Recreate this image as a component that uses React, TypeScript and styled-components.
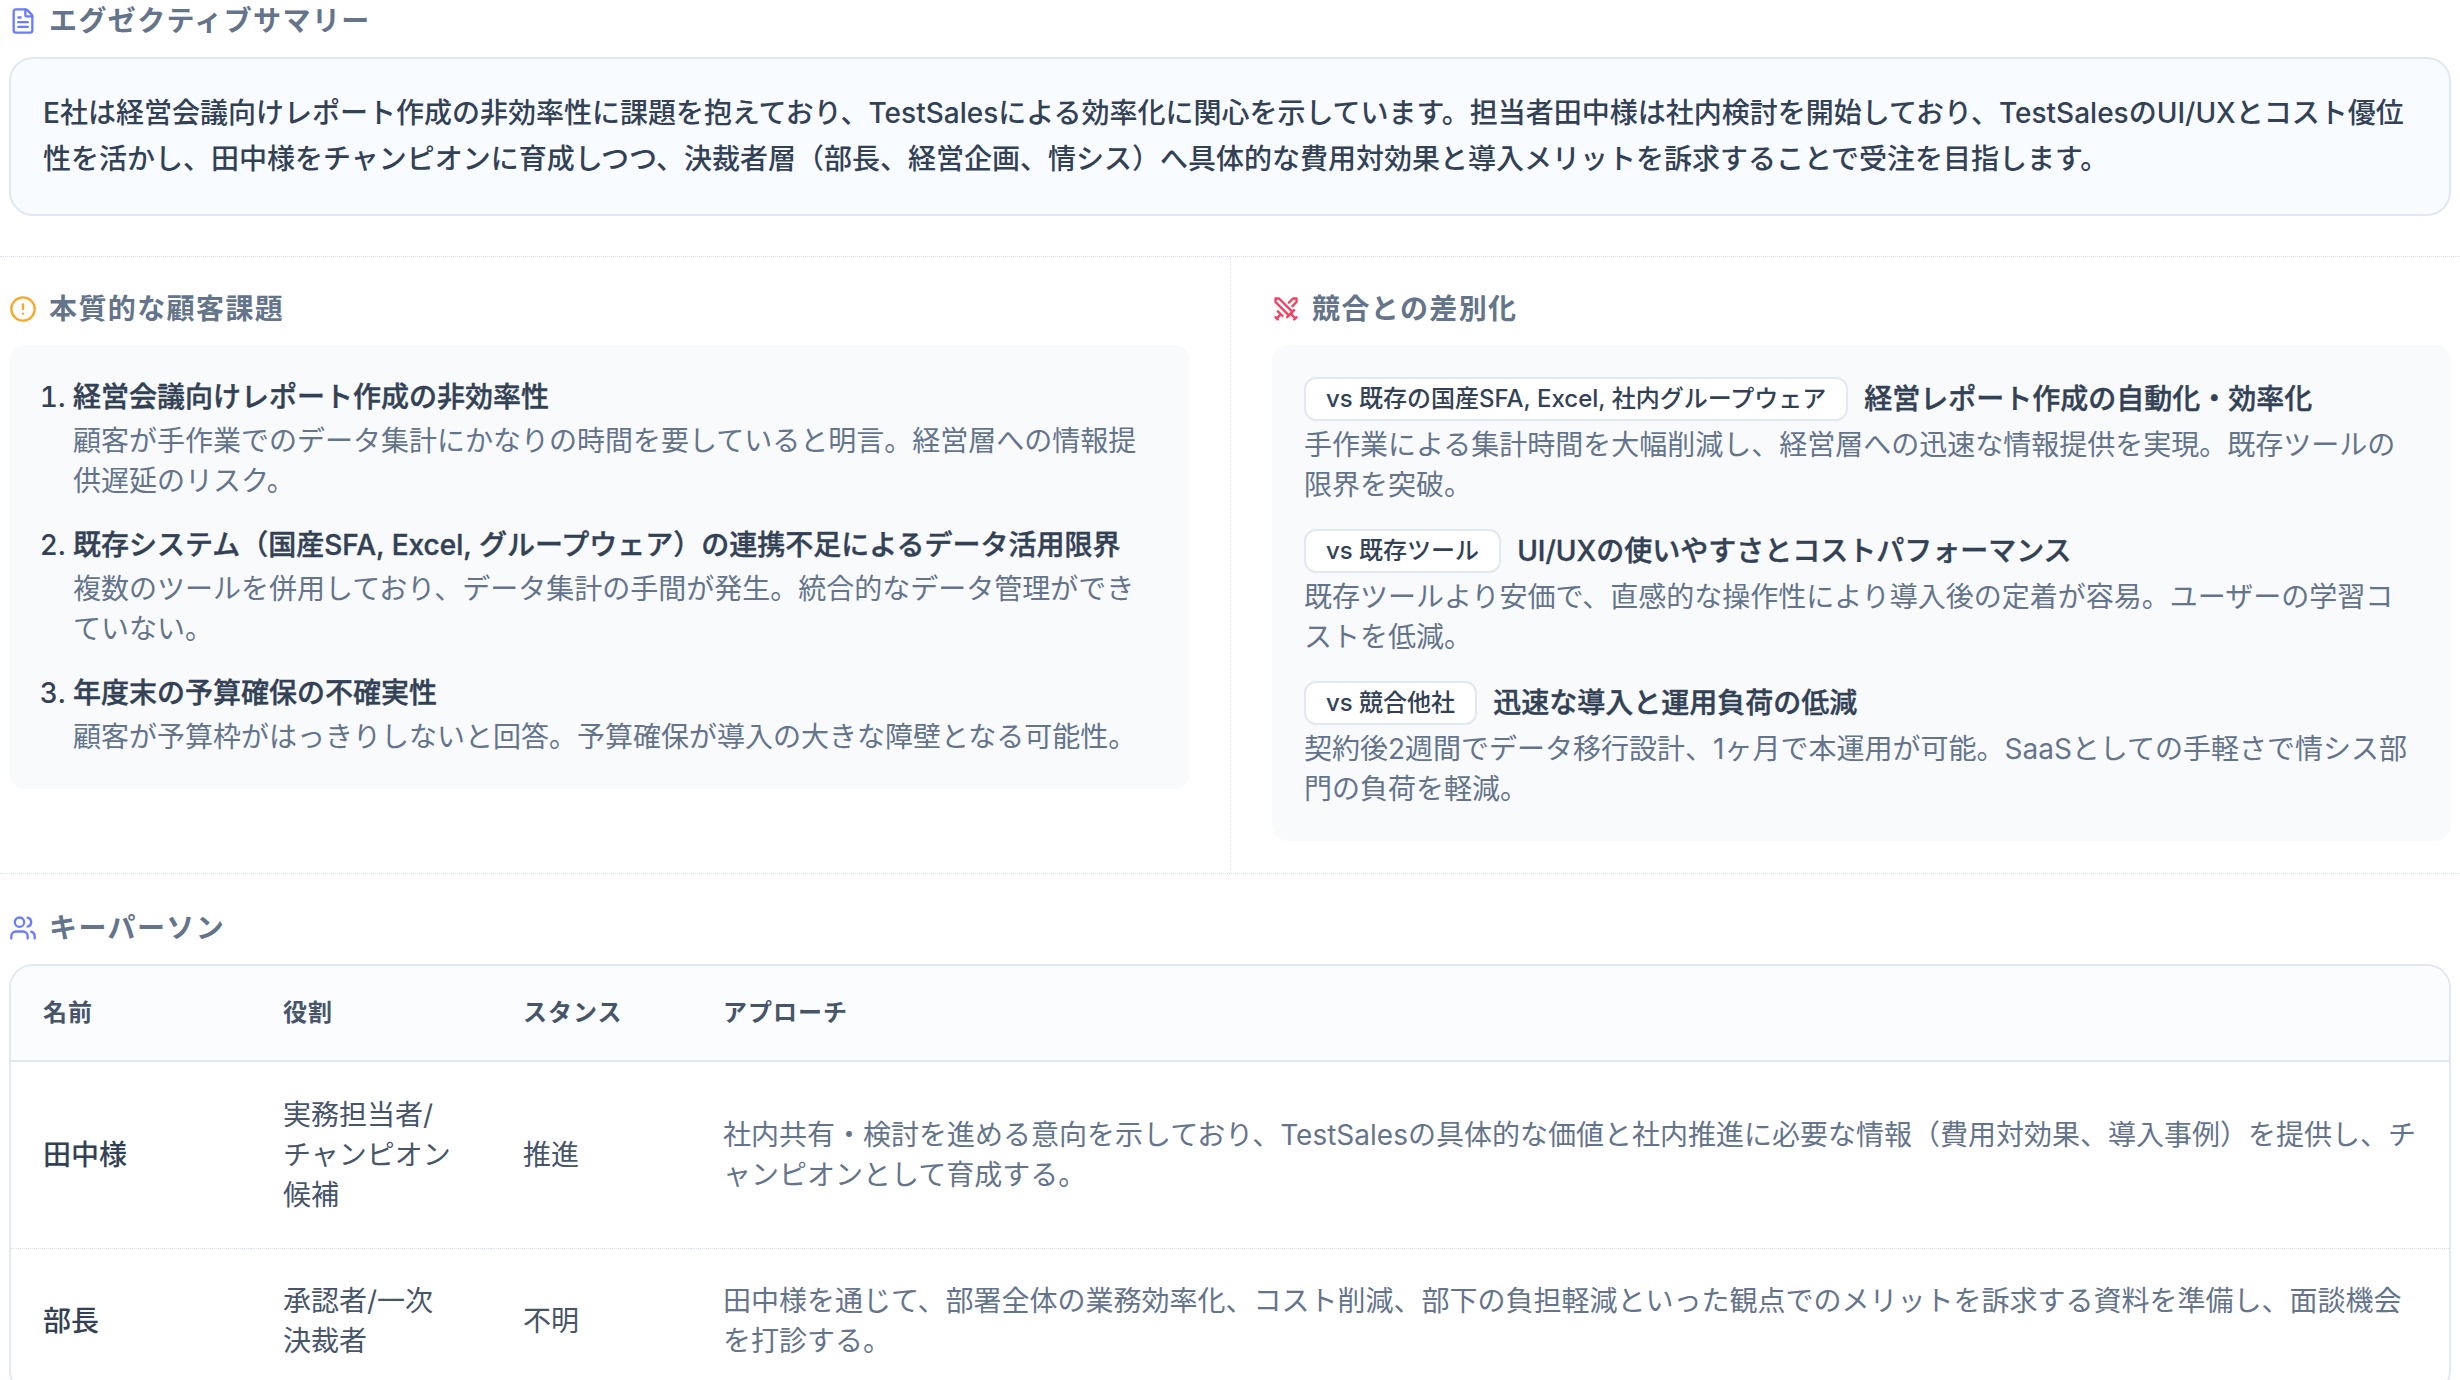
import React from 'react';
import styled, { createGlobalStyle } from 'styled-components';
import { FileText, CircleAlert, Swords, Users } from 'lucide-react';

const GlobalStyle = createGlobalStyle`
  html, body {
    margin: 0;
    height: 100%;
    overflow: hidden;
    background: #fff;
  }
  body {
    font-family: Inter, "Noto Sans CJK JP", sans-serif;
    font-size: 28px;
    line-height: 40px;
    color: #334155;
  }
  * { box-sizing: border-box; }
`;

const Page = styled.div`
  display: flex;
  flex-direction: column;
  padding-top: 1px;
`;

const Block = styled.section`
  padding: 0 9px;
`;

const TableBlock = styled(Block)`
  padding-top: 34px;
`;

const Heading = styled.h3`
  display: flex;
  align-items: center;
  gap: 12px;
  margin: 0 0 16px;
  font-size: 28px;
  line-height: 40px;
  font-weight: 600;
  letter-spacing: 1.4px;
  color: #64748b;
`;

const SummaryCard = styled.div`
  padding: 32px;
  background: #f8fbff;
  border: 2px solid #e2e8f0;
  border-radius: 24px;
  font-weight: 500;
  line-height: 45.5px;
  color: #334155;
`;

const Columns = styled.div`
  display: grid;
  grid-template-columns: 1fr 1fr;
  margin-top: 40px;
  border-top: 1px dotted #d5e0f0;
  border-bottom: 1px dotted #d5e0f0;
`;

const LeftColumn = styled.section`
  padding: 32px 40px 32px 9px;
`;

const RightColumn = styled.section`
  padding: 32px 9px 32px 41px;
  border-left: 1px dotted #d5e0f0;
`;

const InsetCard = styled.div`
  padding: 32px;
  background: #f8fafc;
  border-radius: 16px;
`;

const IssueList = styled.ol`
  display: flex;
  flex-direction: column;
  gap: 24px;
  margin: 0;
  padding: 0 0 0 32px;
`;

const Issue = styled.li`
  font-weight: 500;
  color: #334155;
`;

const ItemTitle = styled.div`
  font-weight: 500;
  -webkit-text-stroke: 0.4px #334155;
  color: #334155;
`;

const ItemText = styled.p`
  margin: 4px 0 0;
  font-weight: 400;
  color: #64748b;
`;

const DiffList = styled.div`
  display: flex;
  flex-direction: column;
  gap: 24px;
`;

const DiffTop = styled.div`
  display: flex;
  align-items: center;
  gap: 16px;
  height: 44px;
`;

const VsBadge = styled.span`
  padding: 4px 20px;
  font-size: 24px;
  line-height: 32px;
  font-weight: 500;
  color: #334155;
  background: #fff;
  border: 2px solid #e2e8f0;
  border-radius: 12px;
  white-space: nowrap;
`;

const DiffTitle = styled.span`
  font-weight: 500;
  -webkit-text-stroke: 0.4px #334155;
  color: #334155;
`;

const TableCard = styled.div`
  border: 2px solid #e2e8f0;
  border-radius: 24px;
  overflow: hidden;
`;

const Table = styled.table`
  width: 100%;
  table-layout: fixed;
  border-collapse: separate;
  border-spacing: 0;
`;

const HeadCell = styled.th<{ $width?: number }>`
  ${(p) => (p.$width ? `width: ${p.$width}px;` : '')}
  padding: 31px 32px;
  font-size: 24px;
  line-height: 32px;
  font-weight: 600;
  letter-spacing: 1px;
  text-align: left;
  color: #475569;
  background: #fafcfe;
  border-bottom: 2px solid #e2e8f0;
`;

const Row = styled.tr`
  & + & td {
    padding: 32px;
    border-top: 1px dotted #d5e0f0;
  }
`;

const NameCell = styled.td`
  padding: 33px 32px;
  font-weight: 500;
  color: #334155;
`;

const Cell = styled.td`
  padding: 33px 32px;
  color: #475569;
`;

const ApproachCell = styled.td`
  padding: 33px 32px;
  color: #64748b;
`;

const issues = [
  {
    title: '経営会議向けレポート作成の非効率性',
    text: '顧客が手作業でのデータ集計にかなりの時間を要していると明言。経営層への情報提供遅延のリスク。',
  },
  {
    title: '既存システム（国産SFA, Excel, グループウェア）の連携不足によるデータ活用限界',
    text: '複数のツールを併用しており、データ集計の手間が発生。統合的なデータ管理ができていない。',
  },
  {
    title: '年度末の予算確保の不確実性',
    text: '顧客が予算枠がはっきりしないと回答。予算確保が導入の大きな障壁となる可能性。',
  },
];

const diffs = [
  {
    vs: 'vs 既存の国産SFA, Excel, 社内グループウェア',
    title: '経営レポート作成の自動化・効率化',
    text: '手作業による集計時間を大幅削減し、経営層への迅速な情報提供を実現。既存ツールの限界を突破。',
  },
  {
    vs: 'vs 既存ツール',
    title: 'UI/UXの使いやすさとコストパフォーマンス',
    text: '既存ツールより安価で、直感的な操作性により導入後の定着が容易。ユーザーの学習コストを低減。',
  },
  {
    vs: 'vs 競合他社',
    title: '迅速な導入と運用負荷の低減',
    text: '契約後2週間でデータ移行設計、1ヶ月で本運用が可能。SaaSとしての手軽さで情シス部門の負荷を軽減。',
  },
];

const people = [
  {
    name: '田中様',
    role: ['実務担当者/', 'チャンピオン', '候補'],
    stance: '推進',
    approach:
      '社内共有・検討を進める意向を示しており、TestSalesの具体的な価値と社内推進に必要な情報（費用対効果、導入事例）を提供し、チャンピオンとして育成する。',
  },
  {
    name: '部長',
    role: ['承認者/一次', '決裁者'],
    stance: '不明',
    approach:
      '田中様を通じて、部署全体の業務効率化、コスト削減、部下の負担軽減といった観点でのメリットを訴求する資料を準備し、面談機会を打診する。',
  },
];

const App = () => (
  <Page>
    <GlobalStyle />
    <Block>
      <Heading>
        <FileText size={28} color="#6b7cff" />
        エグゼクティブサマリー
      </Heading>
      <SummaryCard>
        E社は経営会議向けレポート作成の非効率性に課題を抱えており、TestSalesによる効率化に関心を示しています。担当者田中様は社内検討を開始しており、TestSalesのUI/UXとコスト優位性を活かし、田中様をチャンピオンに育成しつつ、決裁者層（部長、経営企画、情シス）へ具体的な費用対効果と導入メリットを訴求することで受注を目指します。
      </SummaryCard>
    </Block>

    <Columns>
      <LeftColumn>
        <Heading>
          <CircleAlert size={28} color="#f9a825" />
          本質的な顧客課題
        </Heading>
        <InsetCard>
          <IssueList>
            {issues.map((issue) => (
              <Issue key={issue.title}>
                <ItemTitle>{issue.title}</ItemTitle>
                <ItemText>{issue.text}</ItemText>
              </Issue>
            ))}
          </IssueList>
        </InsetCard>
      </LeftColumn>
      <RightColumn>
        <Heading>
          <Swords size={28} color="#f43f5e" />
          競合との差別化
        </Heading>
        <InsetCard>
          <DiffList>
            {diffs.map((diff) => (
              <div key={diff.vs}>
                <DiffTop>
                  <VsBadge>{diff.vs}</VsBadge>
                  <DiffTitle>{diff.title}</DiffTitle>
                </DiffTop>
                <ItemText>{diff.text}</ItemText>
              </div>
            ))}
          </DiffList>
        </InsetCard>
      </RightColumn>
    </Columns>

    <TableBlock>
      <Heading>
        <Users size={28} color="#6b7cff" />
        キーパーソン
      </Heading>
      <TableCard>
        <Table>
          <thead>
            <tr>
              <HeadCell $width={240}>名前</HeadCell>
              <HeadCell $width={240}>役割</HeadCell>
              <HeadCell $width={200}>スタンス</HeadCell>
              <HeadCell>アプローチ</HeadCell>
            </tr>
          </thead>
          <tbody>
            {people.map((person) => (
              <Row key={person.name}>
                <NameCell>{person.name}</NameCell>
                <Cell>
                  {person.role.map((line) => (
                    <div key={line}>{line}</div>
                  ))}
                </Cell>
                <Cell>{person.stance}</Cell>
                <ApproachCell>{person.approach}</ApproachCell>
              </Row>
            ))}
          </tbody>
        </Table>
      </TableCard>
    </TableBlock>
  </Page>
);

export default App;
